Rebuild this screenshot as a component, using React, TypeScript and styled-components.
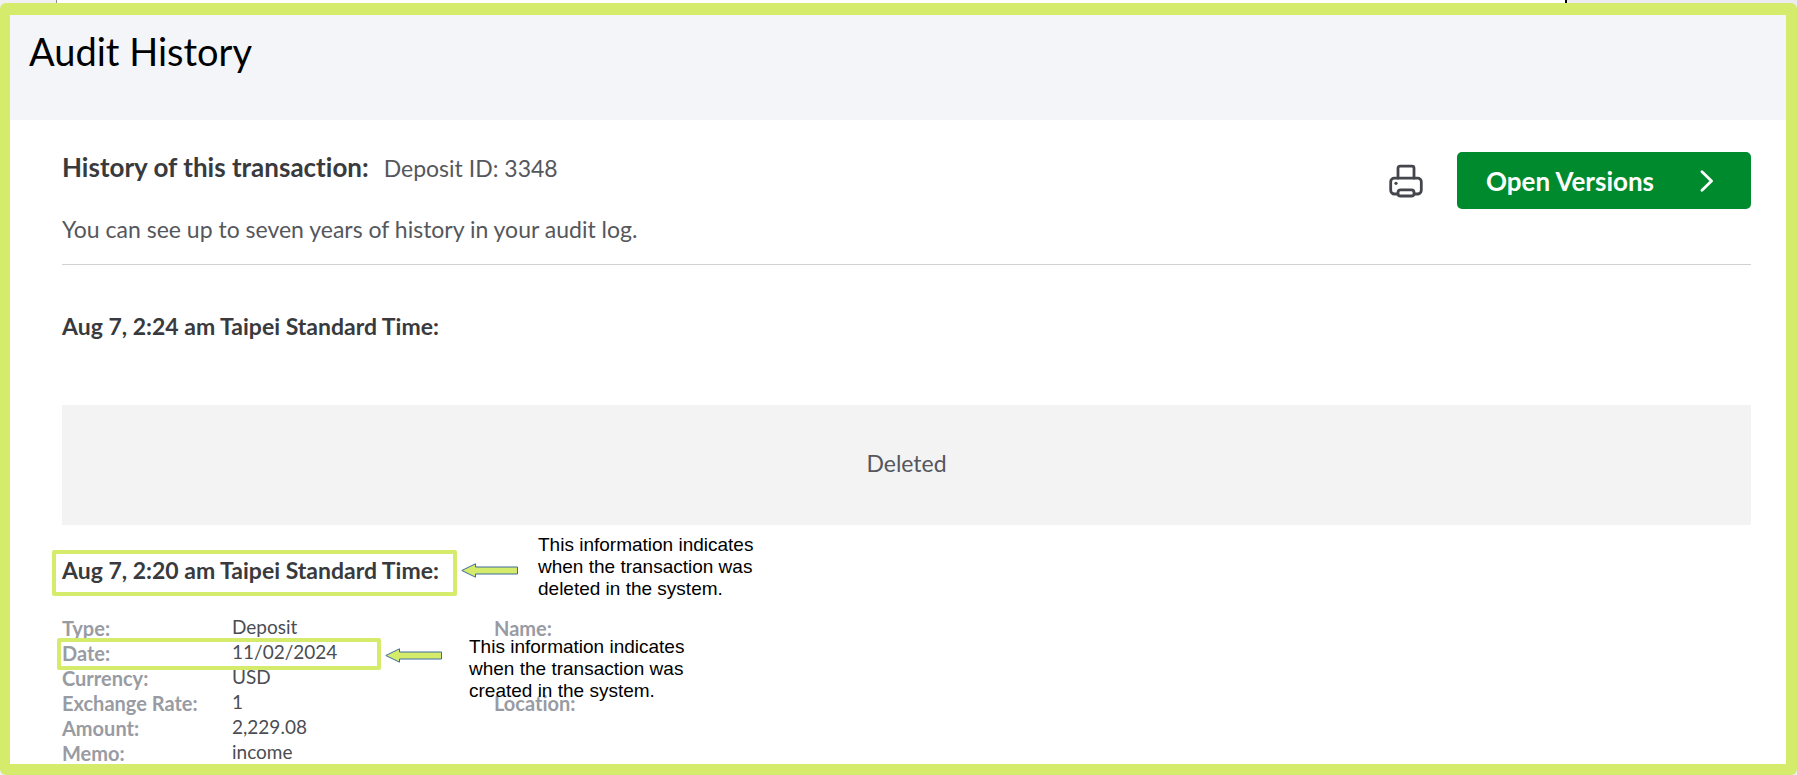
import React from 'react';
import styled, { createGlobalStyle } from 'styled-components';

const LIME = '#d4eb6b';

const GlobalStyle = createGlobalStyle`
  * { box-sizing: border-box; }
  body {
    margin: 0;
    font-family: Lato, 'Open Sans', sans-serif;
    font-size: 23px;
    line-height: 32px;
    font-variant-ligatures: none;
    color: #55575c;
    background: #ffffff;
  }
`;

const Backdrop = styled.div`
  display: flex;
  flex-direction: column;
  min-height: 100vh;
  padding: 3px 0 1px;
  background: linear-gradient(
    to right,
    #f0f0f2 56px,
    #8c8c8c 56px 57px,
    #ffffff 57px calc(100% - 232px),
    #000000 calc(100% - 232px) calc(100% - 230px),
    #ececf0 calc(100% - 230px)
  );
`;

const Frame = styled.main`
  flex: 1;
  display: flex;
  flex-direction: column;
  padding: 12px 11px 11px 10px;
  border-radius: 6px;
  background: ${LIME};
`;

const Header = styled.header`
  padding: 13px 19px 46px;
  background: #f4f5f9;
`;

const Title = styled.h1`
  margin: 0;
  font-size: 38px;
  font-weight: 400;
  line-height: 46px;
  color: #000000;
`;

const Content = styled.div`
  flex: 1;
  padding: 31px 35px 9px 52px;
  background: #ffffff;
`;

const Summary = styled.section`
  display: flex;
  justify-content: space-between;
  align-items: flex-start;
  padding-bottom: 19px;
  border-bottom: 1px solid #d0d2d6;
`;

const SummaryText = styled.div`
  display: flex;
  flex-direction: column;
  gap: 29px;
`;

const SummaryLine = styled.div`
  display: flex;
  align-items: baseline;
  gap: 15px;
`;

const SummaryTitle = styled.h2`
  margin: 0;
  font-size: 26px;
  font-weight: 700;
  line-height: 32px;
  color: #393a3d;
`;

const Text = styled.p`
  margin: 0;
`;

const Actions = styled.div`
  display: flex;
  align-items: center;
  gap: 33px;
  padding-top: 1px;
`;

const PrintButton = styled.button`
  display: flex;
  padding: 0;
  border: 0;
  background: none;
  color: #44464b;
  cursor: pointer;
`;

const VersionsButton = styled.button`
  display: flex;
  justify-content: space-between;
  align-items: center;
  width: 294px;
  height: 57px;
  padding: 0 37px 0 29px;
  border: 0;
  border-radius: 5px;
  background: #008a2e;
  color: #ffffff;
  font-family: inherit;
  font-size: 26px;
  font-weight: 700;
  cursor: pointer;
`;

const Timestamp = styled.h3`
  margin: 45px 0 63px;
  font-size: 23px;
  font-weight: 700;
  line-height: 32px;
  color: #393a3d;
`;

const MarkedTimestamp = styled(Timestamp)`
  position: relative;
  width: 405px;
  margin: 25px 0 19px -10px;
  padding: 0 0 6px 6px;
  border: 4px solid ${LIME};
  border-radius: 2px;
  white-space: nowrap;
`;

const DeletedBanner = styled.div`
  display: flex;
  justify-content: center;
  align-items: center;
  height: 120px;
  padding-bottom: 4px;
  background: #f3f3f4;
`;

const Facts = styled.dl`
  display: flex;
  flex-direction: column;
  height: 140px;
  margin: 0;
`;

const FactRow = styled.div`
  position: relative;
  flex: 1;
  display: grid;
  grid-template-columns: 170px 262px 1fr;
  line-height: 23px;
`;

const FactLabel = styled.dt`
  padding-top: 2px;
  font-size: 20px;
  font-weight: 700;
  color: #999ba3;
`;

const FactValue = styled.dd`
  margin: 0;
  font-size: 19px;
  color: #4b4d52;
`;

const RowMark = styled.div`
  position: absolute;
  top: -2px;
  left: -5px;
  width: 324px;
  height: 32px;
  border: 4px solid ${LIME};
  border-radius: 2px;
`;

const Callout = styled.div<{ $top: number; $gap: number; $arrowDrop: number }>`
  position: absolute;
  z-index: 1;
  top: ${(p) => p.$top}px;
  left: calc(100% + 8px);
  display: flex;
  align-items: flex-start;
  gap: ${(p) => p.$gap}px;

  svg {
    flex: none;
    margin-top: ${(p) => p.$arrowDrop}px;
  }
`;

const Note = styled.p`
  width: 222px;
  margin: 0;
  font-family: 'Liberation Sans', Arial, sans-serif;
  font-size: 19px;
  font-weight: 400;
  line-height: 22px;
  white-space: normal;
  color: #000000;
`;

const ArrowIcon = () => (
  <svg width="57" height="15" viewBox="0 0 57 15" aria-hidden="true">
    <path
      d="M0.8 7.5 14.5 0.8V4H56.5V11H14.5V14.2Z"
      fill={LIME}
      stroke="#3f6c9e"
      strokeWidth="1"
    />
  </svg>
);

const PrinterIcon = () => (
  <svg
    width="36"
    height="36"
    viewBox="0 0 36 36"
    fill="none"
    stroke="currentColor"
    strokeWidth="2.8"
    strokeLinecap="round"
    strokeLinejoin="round"
    aria-hidden="true"
  >
    <path d="M10 15.200V5.200a2 2 0 0 1 2-2h12a2 2 0 0 1 2 2v10" />
    <path d="M9.500 31H6.500a3.800 3.800 0 0 1-3.800-3.800V18.800a3.600 3.600 0 0 1 3.600-3.600h23.400a3.600 3.600 0 0 1 3.600 3.600v8.400A3.800 3.800 0 0 1 29.500 31h-3" />
    <rect x="10" y="26.800" width="16" height="6.200" rx="2.600" />
    <circle cx="8" cy="20.300" r="1.600" fill="currentColor" stroke="none" />
  </svg>
);

const ChevronIcon = () => (
  <svg width="14" height="22" viewBox="0 0 14 22" fill="none" aria-hidden="true">
    <path
      d="M2 1.800 11.500 11 2 20.200"
      stroke="#ffffff"
      strokeWidth="2.800"
      strokeLinecap="round"
      strokeLinejoin="round"
    />
  </svg>
);

type Fact = { label: string; value: string; side?: string; marked?: boolean };

const facts: Fact[] = [
  { label: 'Type:', value: 'Deposit', side: 'Name:' },
  { label: 'Date:', value: '11/02/2024', marked: true },
  { label: 'Currency:', value: 'USD' },
  { label: 'Exchange Rate:', value: '1', side: 'Location:' },
  { label: 'Amount:', value: '2,229.08' },
  { label: 'Memo:', value: 'income' },
];

export default function App() {
  return (
    <>
      <GlobalStyle />
      <Backdrop>
        <Frame>
          <Header>
            <Title>Audit History</Title>
          </Header>
          <Content>
            <Summary>
              <SummaryText>
                <SummaryLine>
                  <SummaryTitle>History of this transaction:</SummaryTitle>
                  <Text>Deposit ID: 3348</Text>
                </SummaryLine>
                <Text>You can see up to seven years of history in your audit log.</Text>
              </SummaryText>
              <Actions>
                <PrintButton type="button" aria-label="Print">
                  <PrinterIcon />
                </PrintButton>
                <VersionsButton type="button">
                  Open Versions
                  <ChevronIcon />
                </VersionsButton>
              </Actions>
            </Summary>

            <Timestamp>Aug 7, 2:24 am Taipei Standard Time:</Timestamp>
            <DeletedBanner>Deleted</DeletedBanner>

            <MarkedTimestamp>
              Aug 7, 2:20 am Taipei Standard Time:
              <Callout $top={-20} $gap={20} $arrowDrop={29}>
                <ArrowIcon />
                <Note>This information indicates when the transaction was deleted in the system.</Note>
              </Callout>
            </MarkedTimestamp>

            <Facts>
              {facts.map((fact) => (
                <FactRow key={fact.label}>
                  <FactLabel>{fact.label}</FactLabel>
                  <FactValue>{fact.value}</FactValue>
                  {fact.side && <FactLabel>{fact.side}</FactLabel>}
                  {fact.marked && (
                    <RowMark>
                      <Callout $top={-6} $gap={27} $arrowDrop={12}>
                        <ArrowIcon />
                        <Note>
                          This information indicates when the transaction was created in the system.
                        </Note>
                      </Callout>
                    </RowMark>
                  )}
                </FactRow>
              ))}
            </Facts>
          </Content>
        </Frame>
      </Backdrop>
    </>
  );
}
